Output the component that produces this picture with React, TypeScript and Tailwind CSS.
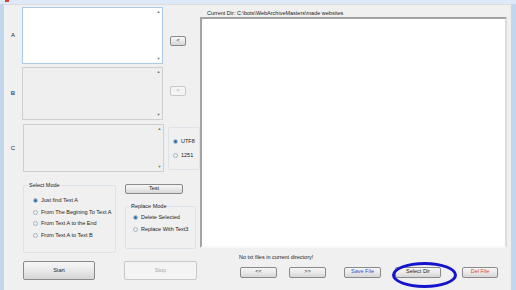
import React from "react";

const font = { fontFamily: '"Liberation Sans", Arial, sans-serif' };

const Btn = ({
  label,
  w,
  h = "h-[11px]",
  disabled = false,
  color = "text-[#1e1e1e]",
  extra = "",
}: {
  label: string;
  w: string;
  h?: string;
  disabled?: boolean;
  color?: string;
  extra?: string;
}) => (
  <div
    className={`${w} ${h} ${extra} flex items-center justify-center rounded-[2px] text-[5.5px] leading-none whitespace-nowrap border ${
      disabled
        ? "border-[#c6c9cc] bg-[#f4f4f4] text-[#a8a8a8]"
        : `border-[#8a8a8a] bg-gradient-to-b from-[#f6f6f6] via-[#e9e9e9] to-[#d6d6d6] ${color}`
    }`}
  >
    {label}
  </div>
);

const Radio = ({ label, checked = false }: { label: string; checked?: boolean }) => (
  <div className="flex items-center gap-[3px] h-[11.5px] whitespace-nowrap">
    <div className="shrink-0 w-[5px] h-[5px] rounded-full border border-[#a8b4c0] bg-[#eef1f4] flex items-center justify-center">
      {checked && <div className="w-[3px] h-[3px] rounded-full bg-[#2a6bb0]" />}
    </div>
    <span className="text-[5.5px] leading-none text-[#222]">{label}</span>
  </div>
);

const TextArea = ({ h, active = false, extra = "" }: { h: string; active?: boolean; extra?: string }) => (
  <div
    className={`${h} ${extra} w-[141px] flex border ${
      active ? "bg-white border-[#a9cbe8]" : "bg-[#efefef] border-[#cfcfcf]"
    }`}
  >
    <div className="flex-1" />
    <div className="w-[7px] flex flex-col justify-between items-center py-[2px] text-[4px] leading-none text-[#777]">
      <span>▲</span>
      <span>▼</span>
    </div>
  </div>
);

export default function App() {
  return (
    <div style={font} className="relative w-[516px] h-[290px] overflow-hidden bg-[#c2d7ee] flex flex-col">
      <div className="h-[4px] bg-[#dde9f6] flex">
        <div className="ml-[5px] w-[4px] h-[2px] bg-[#d9443a]" />
      </div>
      <div className="flex-1 flex pl-[4px] pr-[5px]">
        <div className="flex-1 flex bg-[#f0f0f0] border-t border-[#dcdcdc]">
          {/* left column */}
          <div className="w-[196px] shrink-0 flex flex-col">
            <div className="flex mt-[2px] h-[57px]">
              <div className="w-[18px] flex items-center justify-center text-[6px] text-[#222]">A</div>
              <TextArea h="h-[57px]" active />
              <div className="ml-[7px] mt-[29px]">
                <Btn label="<" w="w-[16px]" h="h-[10px]" />
              </div>
            </div>
            <div className="flex mt-[3px] h-[53px]">
              <div className="w-[18px] flex items-center justify-center text-[6px] font-bold text-[#2f4f86]">B</div>
              <TextArea h="h-[53px]" />
              <div className="ml-[7px] mt-[19px]">
                <Btn label="<" w="w-[16px]" h="h-[10px]" disabled />
              </div>
            </div>
            <div className="flex mt-[4px] h-[48px]">
              <div className="w-[18px] flex items-center justify-center text-[6px] text-[#222]">C</div>
              <TextArea h="h-[48px]" extra="ml-[1px]" />
              <div className="ml-[4px] mt-[3px] w-[32px] h-[43px] border border-[#dde3e8] rounded-[2px] flex flex-col justify-center pl-[4px] gap-[3px]">
                <Radio label="UTF8" checked />
                <Radio label="1251" />
              </div>
            </div>
            <div className="flex mt-[9px]">
              <fieldset className="min-w-0 shrink-0 ml-[19px] w-[93px] h-[72px] border border-[#dbe2e8] rounded-[2px] px-[10px]">
                <legend className="text-[5.5px] leading-[8px] text-[#222] -ml-[6px] px-[1px]">Select Mode</legend>
                <div className="mt-[6px] -ml-[1px]">
                  <Radio label="Just find Text A" checked />
                  <Radio label="From The Begining To Text A" />
                  <Radio label="From Text A to the End" />
                  <Radio label="From Text A to Text B" />
                </div>
              </fieldset>
              <div className="ml-[9px] flex flex-col">
                <Btn label="Test" w="w-[58px]" h="h-[10px]" extra="mt-[3px]" />
                <fieldset className="min-w-0 mt-[8px] w-[71px] h-[47px] border border-[#dbe2e8] rounded-[2px] px-[7px]">
                  <legend className="text-[5.5px] leading-[8px] text-[#222] -ml-[3px] px-[1px]">Replace Mode</legend>
                  <div className="mt-[2px]">
                    <Radio label="Delete Selected" checked />
                    <Radio label="Replace With Text3" />
                  </div>
                </fieldset>
              </div>
            </div>
            <div className="flex mt-[8px]">
              <Btn label="Start" w="w-[72px]" h="h-[19px]" extra="ml-[19px]" />
              <Btn label="Stop" w="w-[73px]" h="h-[19px]" extra="ml-[29px]" disabled />
            </div>
          </div>
          {/* right column */}
          <div className="flex-1 flex flex-col">
            <div className="h-[12px] flex items-end pl-[7px] pb-[1px] text-[5.5px] leading-none text-[#222] whitespace-nowrap">
              Current Dir: C:\bots\WebArchiveMasters\made websites
            </div>
            <div className="w-[307px] h-[231px] bg-white border-2 border-t-[#a3a3a3] border-l-[#a3a3a3] border-r-[#dcdcdc] border-b-[#f7f7f7]" />
            <div className="mt-[7px] pl-[39px] text-[5.5px] leading-none text-[#222] whitespace-nowrap">No txt files in current directory!</div>
            <div className="flex mt-[6px] pl-[40px]">
              <Btn label="<<" w="w-[37px]" />
              <Btn label=">>" w="w-[37px]" extra="ml-[12px]" />
              <Btn label="Save File" w="w-[37px]" extra="ml-[18px]" color="text-[#2b4fd6]" />
              <Btn label="Select Dir" w="w-[46px]" extra="ml-[14px]" />
              <Btn label="Del File" w="w-[36px]" extra="ml-[21px]" color="text-[#e2452e]" />
            </div>
          </div>
        </div>
      </div>
      <div className="absolute left-[392px] top-[262px] w-[65px] h-[26px] rounded-[50%] border-[3px] border-[#1414cc]" />
    </div>
  );
}
